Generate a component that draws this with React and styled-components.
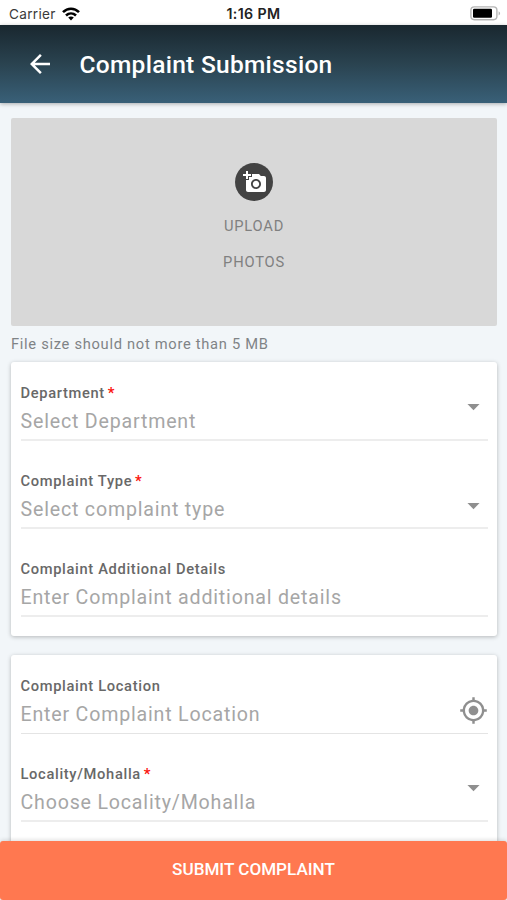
import React from "react";
import styled, { createGlobalStyle } from "styled-components";
import {
  MdAddAPhoto,
  MdArrowBack,
  MdArrowDropDown,
  MdMyLocation,
} from "react-icons/md";

const GlobalStyle = createGlobalStyle`
  * {
    box-sizing: border-box;
  }
  body {
    margin: 0;
    background-color: #f2f6f9;
    font-family: Roboto, "Liberation Sans", sans-serif;
  }
`;

const Screen = styled.div`
  display: flex;
  flex-direction: column;
  width: 507px;
  height: 900px;
  overflow: hidden;
  background-color: #f2f6f9;
`;

const StatusBar = styled.div`
  display: grid;
  grid-template-columns: 1fr auto 1fr;
  align-items: center;
  flex: none;
  height: 25px;
  padding: 2px 6px 0 9px;
  background-color: #fff;
  font-family: Inter, sans-serif;
  font-size: 13.6px;
  line-height: 22px;
  color: #3a3a3a;
`;

const Carrier = styled.div`
  display: flex;
  align-items: center;
  gap: 6px;
  letter-spacing: 0.3px;
`;

const Time = styled.div`
  margin-right: 3px;
  font-size: 14.2px;
  font-weight: 600;
  letter-spacing: 0.4px;
  color: #222;
`;

const Battery = styled.div`
  display: flex;
  justify-content: flex-end;
`;

const Header = styled.header`
  display: flex;
  align-items: center;
  flex: none;
  height: 78px;
  padding-left: 25px;
  background: linear-gradient(#19272f, #2a4350 50%, #396078);
  box-shadow: 0 1px 4px rgba(0, 0, 0, 0.3);
  color: #fff;
`;

const Title = styled.h1`
  margin: 0 0 0 24.5px;
  padding-top: 2px;
  font-size: 24.5px;
  font-weight: 500;
  line-height: 30px;
  letter-spacing: 0.28px;
`;

const Content = styled.main`
  flex: 1;
  min-height: 0;
  overflow: hidden;
  padding: 15px 10px 0 11px;
`;

const UploadBox = styled.div`
  display: flex;
  flex-direction: column;
  align-items: center;
  height: 208px;
  padding-top: 45px;
  border-radius: 2px;
  background-color: #d8d8d8;
`;

const CameraCircle = styled.div`
  display: flex;
  align-items: center;
  justify-content: center;
  width: 38px;
  height: 38px;
  margin-bottom: 7px;
  padding: 0 0 1px 1px;
  border-radius: 50%;
  background-color: #434343;
  color: #fff;
`;

const UploadText = styled.div`
  font-size: 14.7px;
  line-height: 36px;
  letter-spacing: 0.8px;
  color: #808080;
`;

const Hint = styled.p`
  margin: 9px 0;
  font-size: 14.7px;
  line-height: 18px;
  letter-spacing: 0.7px;
  color: #7f8386;
`;

const Card = styled.section`
  display: flex;
  flex-direction: column;
  gap: 9px;
  height: 274px;
  margin-bottom: 19px;
  padding: 0 9px 0 9.5px;
  border-radius: 3px;
  background-color: #fff;
  box-shadow: 0 1px 4px rgba(0, 0, 0, 0.26);
`;

const FieldRow = styled.div`
  display: flex;
  justify-content: space-between;
  flex: none;
  height: 79px;
  border-bottom: ${(props) => props.$line || "2px solid #ededed"};
`;

const Label = styled.div`
  padding-top: 22px;
  font-size: 14.7px;
  font-weight: 500;
  line-height: 18px;
  letter-spacing: 0.66px;
  color: #686868;
`;

const Required = styled.span`
  margin-left: -1.5px;
  font-weight: 700;
  color: #fb1510;
`;

const Placeholder = styled.div`
  margin-top: 8px;
  font-size: 19.6px;
  line-height: 24px;
  letter-spacing: 0.81px;
  color: #a6a6a6;
`;

const Trailing = styled.div`
  height: 29px;
  margin-top: ${(props) => props.$top}px;
  padding-right: 0.5px;
  color: #8f8f8f;
`;

const SubmitButton = styled.button`
  flex: none;
  height: 59px;
  border: 0;
  border-radius: 3px;
  padding: 0 0 3px;
  background-color: #ff7850;
  box-shadow: 0 -1px 4px rgba(0, 0, 0, 0.14);
  font-family: inherit;
  font-size: 17.1px;
  font-weight: 500;
  color: #fff;
  z-index: 1;
`;

const WifiIcon = () => (
  <svg width="18" height="14" viewBox="0 0 18 14" fill="none" stroke="#000" strokeWidth="2.6">
    <path d="M1 5.2C5.6.6 12.400.6 17 5.2" />
    <path d="M4 8.500c2.900-2.700 7.100-2.700 10 0" />
    <path d="M6.200 10.500c1.600-1.500 4-1.500 5.600 0L9 13.500z" fill="#000" stroke="none" />
  </svg>
);

const BatteryIcon = () => (
  <svg width="31" height="15" viewBox="0 0 31 15">
    <rect x="0.900" y="0.900" width="26" height="12.800" rx="3.400" fill="#fff" stroke="#b5b5b5" strokeWidth="1.400" />
    <rect x="3" y="2.800" width="19" height="9" rx="1.200" fill="#000" />
    <path d="M28.600 5.200c2 .9 2 3.300 0 4.200z" fill="#b5b5b5" />
  </svg>
);

const Field = ({ label, placeholder, required, icon, iconTop, line }) => (
  <FieldRow $line={line}>
    <div>
      <Label>
        {label} {required && <Required>*</Required>}
      </Label>
      <Placeholder>{placeholder}</Placeholder>
    </div>
    {icon && <Trailing $top={iconTop}>{icon}</Trailing>}
  </FieldRow>
);

const App = () => {
  return (
    <>
      <GlobalStyle />
      <Screen>
        <StatusBar>
          <Carrier>
            Carrier <WifiIcon />
          </Carrier>
          <Time>1:16 PM</Time>
          <Battery>
            <BatteryIcon />
          </Battery>
        </StatusBar>
        <Header>
          <MdArrowBack size={30} />
          <Title>Complaint Submission</Title>
        </Header>
        <Content>
          <UploadBox>
            <CameraCircle>
              <MdAddAPhoto size={24} />
            </CameraCircle>
            <UploadText>UPLOAD</UploadText>
            <UploadText>PHOTOS</UploadText>
          </UploadBox>
          <Hint>File size should not more than 5 MB</Hint>
          <Card>
            <Field
              label="Department"
              placeholder="Select Department"
              required
              icon={<MdArrowDropDown size={29} />}
              iconTop={30}
            />
            <Field
              label="Complaint Type"
              placeholder="Select complaint type"
              required
              icon={<MdArrowDropDown size={29} />}
              iconTop={41}
            />
            <Field
              label="Complaint Additional Details"
              placeholder="Enter Complaint additional details"
            />
          </Card>
          <Card>
            <Field
              label="Complaint Location"
              placeholder="Enter Complaint Location"
              icon={<MdMyLocation size={29} />}
              iconTop={41}
              line="1px solid #e4e4e4"
            />
            <Field
              label="Locality/Mohalla"
              placeholder="Choose Locality/Mohalla"
              required
              icon={<MdArrowDropDown size={29} />}
              iconTop={30}
            />
          </Card>
        </Content>
        <SubmitButton>SUBMIT COMPLAINT</SubmitButton>
      </Screen>
    </>
  );
};

export default App;
